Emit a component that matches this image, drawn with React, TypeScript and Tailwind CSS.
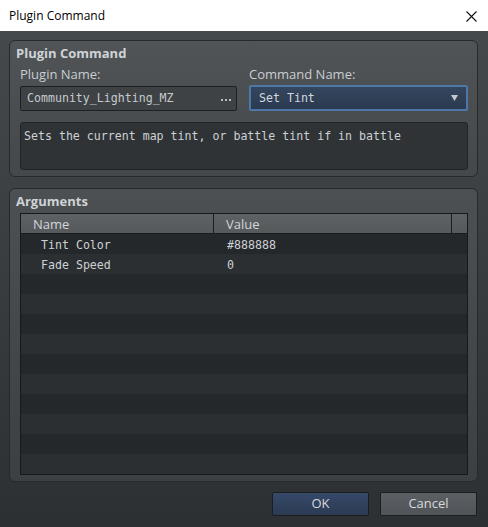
const rows = [
  { name: 'Tint Color', value: '#888888' },
  { name: 'Fade Speed', value: '0' },
]

const ui = "font-['Open_Sans','Noto_Sans',sans-serif]"
const mono = "font-['DejaVu_Sans_Mono',monospace]"

export default function App() {
  const filler = Array.from({ length: 12 }, (_, i) => rows[i] ?? null)

  return (
    <div className={`w-[488px] h-[527px] flex flex-col overflow-hidden ${ui}`}>
      {/* Title bar */}
      <div className="h-[31px] shrink-0 bg-white flex items-center justify-between pl-[9px] pr-[11px]">
        <span className="text-[12px] text-black leading-none">Plugin Command</span>
        <svg width="11" height="11" viewBox="0 0 11 11" className="mt-px">
          <path d="M0.5 0.5 L10.5 10.5 M10.5 0.5 L0.5 10.5" stroke="#111" strokeWidth="1.1" />
        </svg>
      </div>

      {/* Body */}
      <div className="flex-1 flex flex-col pt-[9px] pl-[9px] pr-[10px] bg-gradient-to-b from-[#45494c] to-[#2d3033]">
        {/* Plugin Command group */}
        <div className="h-[137px] shrink-0 rounded-[6px] border border-[#27292b] bg-gradient-to-b from-[#505457] to-[#44484b] pl-[10px] pr-[9px] flex flex-col">
          <div className="pt-[3px] h-[22px] -ml-[4px] text-[13px] font-bold leading-[18px] text-[#cfd3d6]">
            Plugin Command
          </div>
          <div className="flex gap-[12px] mt-px">
            <div className="w-[217px] flex flex-col">
              <div className="h-[20px] text-[13px] leading-[20px] text-[#c9cdd0]">Plugin Name:</div>
              <div className="mt-[2px] h-[25px] rounded-[2px] border border-[#1d1f21] bg-[#3e4245] flex items-center justify-between pl-[6px] pr-[5px]">
                <span className={`${mono} text-[11.6px] text-[#c6cacd]`}>Community_Lighting_MZ</span>
                <span className="flex gap-[2px] items-center pt-[2px]">
                  <span className="w-[2px] h-[2px] bg-[#b8bcbf]" />
                  <span className="w-[2px] h-[2px] bg-[#b8bcbf]" />
                  <span className="w-[2px] h-[2px] bg-[#b8bcbf]" />
                </span>
              </div>
            </div>
            <div className="flex-1 flex flex-col">
              <div className="h-[20px] text-[13px] leading-[20px] text-[#c9cdd0]">Command Name:</div>
              <div className="mt-[1px] h-[26px] rounded-[2px] border-[2px] border-[#4d77a6] bg-gradient-to-b from-[#34465e] to-[#2a3a50] flex items-center justify-between pl-[8px] pr-[8px]">
                <span className={`${mono} text-[11.6px] text-[#d4d8dc] pt-px`}>Set Tint</span>
                <svg width="7" height="6" viewBox="0 0 7 6">
                  <path d="M0 0 H7 L3.5 6 Z" fill="#c3c7cb" />
                </svg>
              </div>
            </div>
          </div>
          <div className={`mt-[11px] h-[48px] rounded-[3px] border border-[#222527] bg-[#2f3336] pl-[3px] pt-[5px] leading-[16px] ${mono} text-[11.6px] text-[#cdd1d4]`}>
            Sets the current map tint, or battle tint if in battle
          </div>
        </div>

        {/* Arguments group */}
        <div className="mt-[11px] h-[294px] shrink-0 rounded-[6px] border border-[#27292b] bg-gradient-to-b from-[#4c5053] to-[#3c4043] pl-[10px] pr-[9px] flex flex-col">
          <div className="pt-[3px] h-[24px] -ml-[4px] text-[13px] font-bold leading-[18px] text-[#cfd3d6]">
            Arguments
          </div>
          <div className="h-[262px] border border-[#16181a] flex flex-col bg-[#25282b]">
            <div className="h-[20px] shrink-0 flex bg-gradient-to-b from-[#5e6265] to-[#55595c] border-b border-[#1a1c1e] text-[13px] text-[#d2d6d9]">
              <div className="w-[193px] border-r border-[#1a1c1e] pl-[12px] leading-[20px]">Name</div>
              <div className="w-[238px] border-r border-[#1a1c1e] pl-[12px] leading-[20px]">Value</div>
              <div className="flex-1" />
            </div>
            {filler.map((r, i) => (
              <div
                key={i}
                className={`h-[20px] shrink-0 flex items-center pt-[3px] ${mono} text-[11.6px] text-[#cdd1d4] ${i % 2 === 0 ? 'bg-[#25282b]' : 'bg-[#2c2f32]'}`}
              >
                <div className="w-[194px] pl-[20px]">{r?.name}</div>
                <div className="pl-[12px]">{r?.value}</div>
              </div>
            ))}
          </div>
        </div>

        {/* Buttons */}
        <div className="mt-[10px] flex justify-end gap-[11px] pr-px">
          <button className="w-[97px] h-[24px] rounded-[2px] border border-[#1b1d1f] bg-gradient-to-b from-[#36496a] to-[#2c3b53] text-[13px] text-[#d6dadd]">
            OK
          </button>
          <button className="w-[97px] h-[24px] rounded-[2px] border border-[#1b1d1f] bg-gradient-to-b from-[#5c6064] to-[#505458] text-[13px] text-[#d6dadd]">
            Cancel
          </button>
        </div>
      </div>
    </div>
  )
}
